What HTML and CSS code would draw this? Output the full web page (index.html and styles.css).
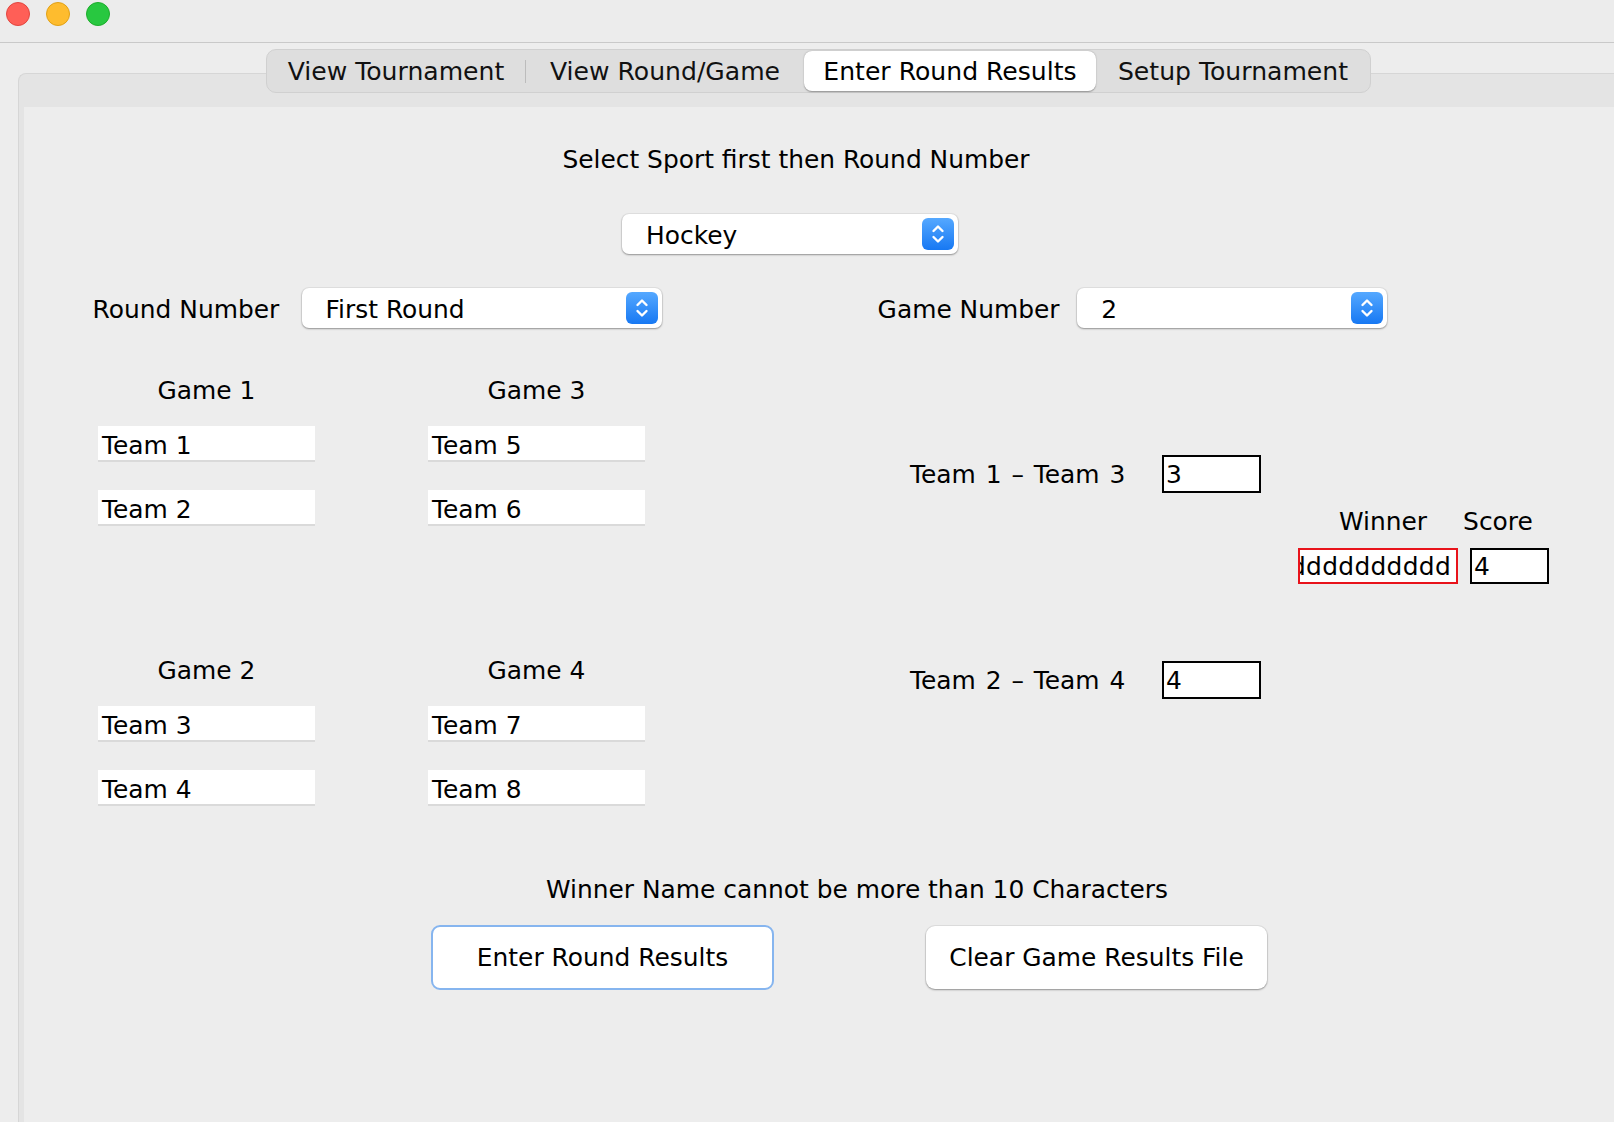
FILE: index.html
```html
<!DOCTYPE html>
<html>
<head>
<meta charset="utf-8">
<title>Tournament</title>
<link rel="stylesheet" href="styles.css">
</head>
<body>
<div class="window">
  <div class="titlebar">
    <span class="light red"></span>
    <span class="light yellow"></span>
    <span class="light green"></span>
  </div>
  <div class="tabs">
    <div class="tab t1">View Tournament</div>
    <div class="tab-sep"></div>
    <div class="tab t2">View Round/Game</div>
    <div class="tab t3 selected">Enter Round Results</div>
    <div class="tab t4">Setup Tournament</div>
  </div>
  <div class="panel">
    <div class="content">
      <div class="heading">Select Sport first then Round Number</div>
      <div class="sport-row">
        <div class="combo combo-sport">
          <span class="combo-text">Hockey</span>
          <span class="combo-btn"><svg width="32" height="32" viewBox="0 0 32 32"><polyline points="11.5,13 16,8.5 20.5,13" fill="none" stroke="#fff" stroke-width="2.4" stroke-linecap="round" stroke-linejoin="round"/><polyline points="11.5,19 16,23.5 20.5,19" fill="none" stroke="#fff" stroke-width="2.4" stroke-linecap="round" stroke-linejoin="round"/></svg></span>
        </div>
      </div>
      <div class="number-row">
        <div class="label round-label">Round Number</div>
        <div class="combo combo-round">
          <span class="combo-text">First Round</span>
          <span class="combo-btn"><svg width="32" height="32" viewBox="0 0 32 32"><polyline points="11.5,13 16,8.5 20.5,13" fill="none" stroke="#fff" stroke-width="2.4" stroke-linecap="round" stroke-linejoin="round"/><polyline points="11.5,19 16,23.5 20.5,19" fill="none" stroke="#fff" stroke-width="2.4" stroke-linecap="round" stroke-linejoin="round"/></svg></span>
        </div>
        <div class="label game-label">Game Number</div>
        <div class="combo combo-game">
          <span class="combo-text">2</span>
          <span class="combo-btn"><svg width="32" height="32" viewBox="0 0 32 32"><polyline points="11.5,13 16,8.5 20.5,13" fill="none" stroke="#fff" stroke-width="2.4" stroke-linecap="round" stroke-linejoin="round"/><polyline points="11.5,19 16,23.5 20.5,19" fill="none" stroke="#fff" stroke-width="2.4" stroke-linecap="round" stroke-linejoin="round"/></svg></span>
        </div>
      </div>
      <div class="games">
        <div class="brackets">
          <div class="game">
            <div class="game-title">Game 1</div>
            <div class="team">Team 1</div>
            <div class="team">Team 2</div>
          </div>
          <div class="game">
            <div class="game-title">Game 3</div>
            <div class="team">Team 5</div>
            <div class="team">Team 6</div>
          </div>
          <div class="game">
            <div class="game-title">Game 2</div>
            <div class="team">Team 3</div>
            <div class="team">Team 4</div>
          </div>
          <div class="game">
            <div class="game-title">Game 4</div>
            <div class="team">Team 7</div>
            <div class="team">Team 8</div>
          </div>
        </div>
        <div class="results">
          <div class="match match1">
            <div class="match-label">Team 1 – Team 3</div>
            <div class="score">3</div>
          </div>
          <div class="wl-row">
            <div class="wl-winner">Winner</div>
            <div class="wl-score">Score</div>
          </div>
          <div class="wf-row">
            <div class="winner"><span>dddddddddd</span></div>
            <div class="score score-small">4</div>
          </div>
          <div class="match match2">
            <div class="match-label">Team 2 – Team 4</div>
            <div class="score">4</div>
          </div>
        </div>
      </div>
      <div class="message">Winner Name cannot be more than 10 Characters</div>
      <div class="buttons">
        <div class="btn btn-enter">Enter Round Results</div>
        <div class="btn btn-clear">Clear Game Results File</div>
      </div>
    </div>
  </div>
</div>
</body>
</html>
```
FILE: styles.css
```css
* { box-sizing: border-box; }
html, body { margin: 0; padding: 0; }
body {
  width: 1614px;
  height: 1122px;
  overflow: hidden;
  background: #ededed;
  font-family: "DejaVu Sans", "Liberation Sans", sans-serif;
  font-size: 24.9px;
  color: #000;
}
.window { height: 1122px; display: flex; flex-direction: column; }

.titlebar {
  height: 43px;
  flex: none;
  background: #ececec;
  border-bottom: 1px solid #c9c9c9;
  display: flex;
  gap: 16px;
  padding: 2px 0 0 6px;
}
.light { width: 24px; height: 24px; border-radius: 50%; }
.red { background: #ff5f57; border: 1px solid #e2463f; }
.yellow { background: #febc2e; border: 1px solid #e1a116; }
.green { background: #28c840; border: 1px solid #1dad2b; }

.tabs {
  position: relative;
  z-index: 1;
  flex: none;
  margin: 6px 0 0 266px;
  width: 1105px;
  height: 44px;
  display: flex;
  align-items: center;
  background: #dedede;
  border: 1px solid #d0d0d0;
  border-radius: 10px;
  font-size: 25.1px;
}
.tab {
  height: 40px;
  display: flex;
  align-items: center;
  justify-content: center;
  white-space: nowrap;
  color: #111;
  padding-top: 1px;
}
.t1 { width: 258px; }
.t2 { width: 278px; }
.t3 { width: 292px; }
.t4 { width: 274px; }
.tab-sep { width: 1px; height: 23px; background: #bcbcbc; }
.selected {
  background: #fff;
  border-radius: 8px;
  box-shadow: 0 0.5px 1.5px rgba(0, 0, 0, 0.35);
  color: #000;
}

.panel {
  flex: 1;
  margin: -20px 0 0 18px;
  border-top: 1px solid #d6d6d6;
  border-left: 1px solid #d6d6d6;
  border-top-left-radius: 8px;
  background: #e4e4e4;
  padding: 33px 0 0 5px;
  display: flex;
  flex-direction: column;
}
.content {
  flex: 1;
  background: #ededed;
  padding-top: 37.5px;
}

.heading {
  width: 1544px;
  height: 30px;
  line-height: 30px;
  text-align: center;
}

.sport-row { margin: 39.5px 0 0 598px; }
.combo {
  display: flex;
  align-items: center;
  height: 40px;
  background: #fff;
  border-radius: 7px;
  box-shadow: 0 0 0 1px rgba(0, 0, 0, 0.05), 0 1px 2px rgba(0, 0, 0, 0.35);
  padding-left: 24px;
}
.combo-text { white-space: nowrap; padding-top: 2px; }
.combo-btn {
  margin-left: auto;
  margin-right: 4px;
  width: 32px;
  height: 32px;
  border-radius: 6px;
  background: linear-gradient(#55a8ff, #1778f3);
  display: flex;
}
.combo-sport { width: 336px; }

.number-row {
  display: flex;
  align-items: center;
  margin: 34px 0 0 68.6px;
}
.label { white-space: nowrap; padding-top: 2px; }
.round-label { width: 209px; }
.combo-round { width: 360px; }
.game-label { margin-left: 216px; width: 199.7px; }
.combo-game { width: 310px; }

.games { display: flex; align-items: flex-start; }
.brackets {
  display: grid;
  grid-template-columns: 217px 217px;
  column-gap: 113px;
  row-gap: 129px;
  margin: 47px 0 0 74px;
}
.game { display: flex; flex-direction: column; }
.game-title { height: 30px; line-height: 32px; text-align: center; }
.team {
  height: 36px;
  margin-top: 21px;
  background: #fff;
  border-bottom: 2px solid #dadada;
  padding: 3px 0 0 4px;
  line-height: 33px;
  white-space: nowrap;
}
.team + .team { margin-top: 28px; }

.results { margin-left: 265px; }
.match { display: flex; align-items: center; }
.match1 { margin-top: 127px; }
.match2 { margin-top: 77px; }
.match-label {
  width: 252px;
  line-height: 30px;
  padding-top: 1px;
  white-space: nowrap;
  word-spacing: 2px;
}
.score {
  width: 99px;
  height: 38px;
  border: 2px solid #000;
  background: #fff;
  padding: 1px 0 0 2px;
  line-height: 34px;
}
.wl-row { display: flex; margin-top: 13px; height: 30px; line-height: 31px; }
.wl-winner { margin-left: 429px; }
.wl-score { margin-left: 36px; }
.wf-row { display: flex; gap: 12px; margin: 12px 0 0 388px; }
.winner {
  width: 160px;
  height: 36px;
  border: 2px solid #e8131b;
  background: #fff;
  display: flex;
  justify-content: flex-end;
  overflow: hidden;
  padding: 1px 5px 0 0;
  line-height: 32px;
  white-space: nowrap;
  letter-spacing: 0.3px;
}
.score-small { width: 79px; height: 36px; line-height: 32px; }

.message {
  margin: 69px 0 0 457px;
  width: 752px;
  height: 30px;
  line-height: 30px;
  text-align: center;
  white-space: nowrap;
}

.buttons {
  display: flex;
  align-items: center;
  margin: 20px 0 0 407px;
}
.btn {
  display: flex;
  align-items: center;
  justify-content: center;
  background: #fff;
  border-radius: 9px;
  white-space: nowrap;
}
.btn-enter {
  width: 343px;
  height: 65px;
  border: 2.5px solid #86b5ef;
}
.btn-clear {
  width: 341px;
  height: 63px;
  margin-left: 152px;
  box-shadow: 0 0 0 1px rgba(0, 0, 0, 0.06), 0 1px 2px rgba(0, 0, 0, 0.35);
}
```
